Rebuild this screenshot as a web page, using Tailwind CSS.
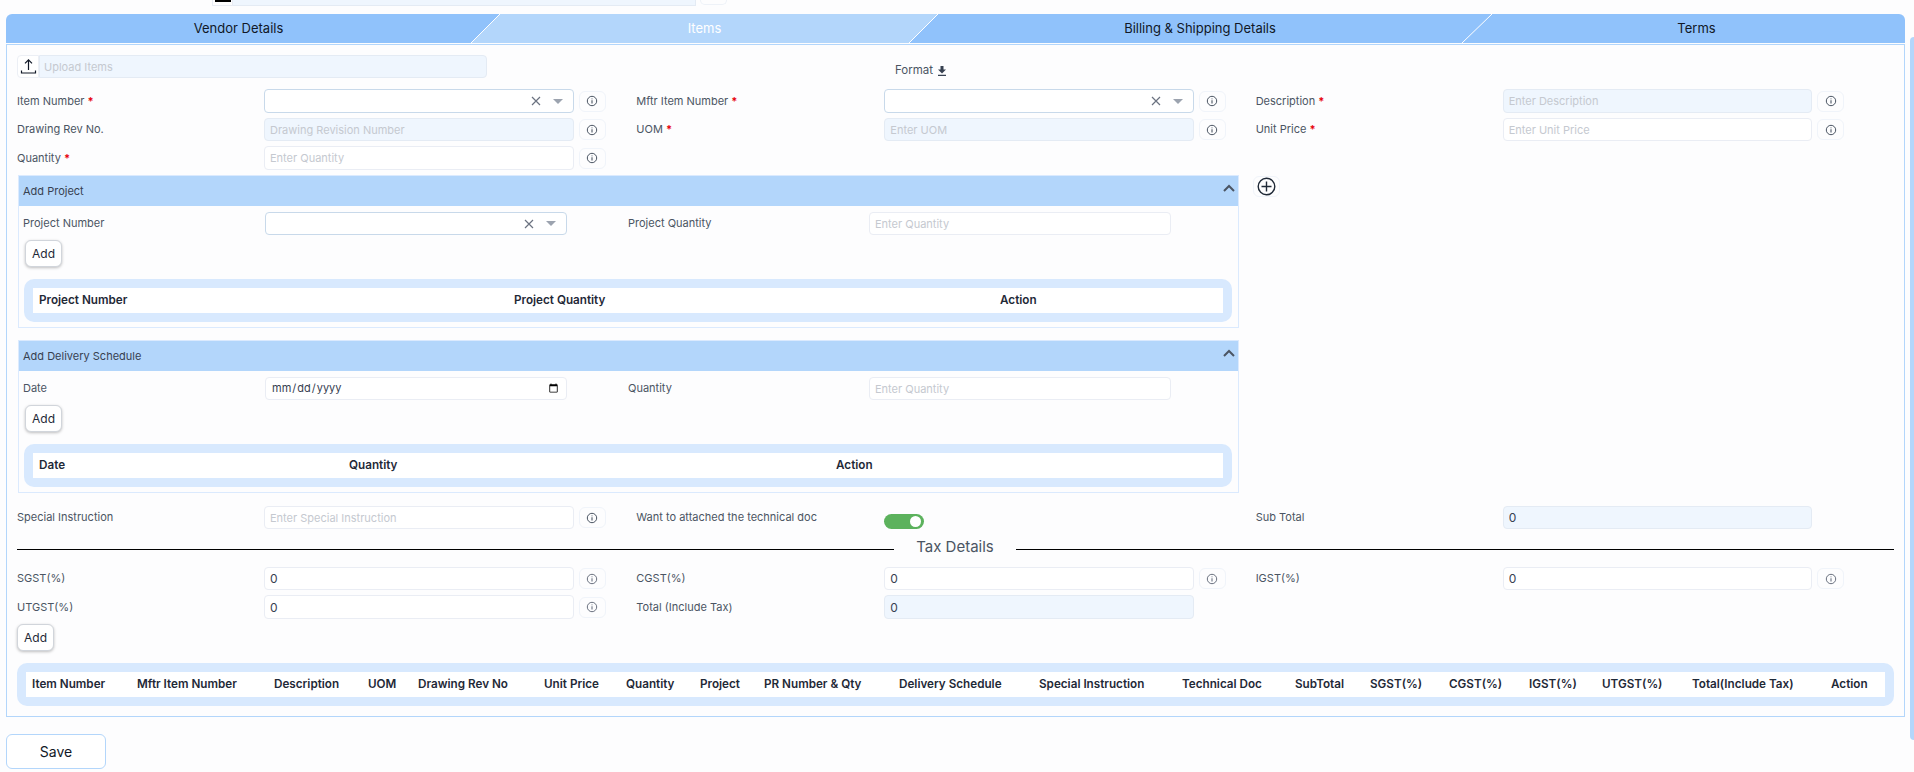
<!DOCTYPE html>
<html lang="en">
<head>
    <meta charset="UTF-8">
    <meta name="viewport" content="width=device-width, initial-scale=1.0">
    <title>Add Items</title>
    <script src="https://cdn.jsdelivr.net/npm/@tailwindcss/browser@4"></script>
</head>
<body class="relative h-[772px] overflow-hidden bg-[#fdfdfe] font-['Inter',sans-serif] text-[11px] text-[#4b5563]">

    <svg class="hidden">
        <symbol id="info" viewBox="0 0 12 12"><circle cx="6" cy="6" r="4.7" fill="none" stroke="currentColor" stroke-width="1"/><path d="M6 3.400v.9M6 5.300v3.200" fill="none" stroke="currentColor" stroke-width="1.100"/></symbol>
        <symbol id="clear" viewBox="0 0 10 10"><path d="M1 1l8 8M9 1l-8 8" fill="none" stroke="currentColor" stroke-width="1.200"/></symbol>
        <symbol id="caret" viewBox="0 0 10 5"><path d="M0 0h10L5 5z" fill="currentColor"/></symbol>
        <symbol id="chevron" viewBox="0 0 12 8"><path d="M1 7l5-5 5 5" fill="none" stroke="currentColor" stroke-width="2"/></symbol>
    </svg>

    <!-- scrollbar -->
    <div class="absolute right-0 top-[37px] h-[703px] w-[4px] rounded-l-md bg-[#b3d6fb]"></div>

    <!-- cut off row above the tabs -->
    <div class="flex h-[14px] items-start overflow-hidden pl-[212px]">
        <div class="flex h-[6px] w-[21px] justify-center border-b border-x border-[#e8ecf4]"><div class="h-[2px] w-[16px] bg-black"></div></div>
        <div class="h-[6px] w-[463px] border-b border-r border-[#e4ebf4] bg-[#eff6fe]"></div>
        <div class="ml-[4px] h-[5px] w-[27px] rounded-b-md border-b border-x border-[#eef2f8]"></div>
    </div>

    <div class="mx-[6px] w-[1899px]">
        <!-- tabs -->
        <div class="relative flex h-[29px] overflow-hidden rounded-t-md bg-[#90c2fb] text-[13px] text-[#111827]">
            <div class="flex w-[465px] items-center justify-center">Vendor Details</div>
            <div class="flex w-[467px] items-center justify-center bg-[#b3d6fb] text-white [clip-path:polygon(29px_0,100%_0,calc(100%-29px)_100%,0_100%)]">Items</div>
            <div class="flex w-[524px] items-center justify-center">Billing &amp; Shipping Details</div>
            <div class="flex w-[443px] items-center justify-center pl-[26px]">Terms</div>
            <svg class="absolute inset-0 h-[29px] w-[1899px]" viewBox="0 0 1899 29"><path d="M465 29L494 0M903 29L932 0M1456 29L1486 0" stroke="#fff" stroke-width="1" fill="none"/></svg>
        </div>

        <!-- form panel -->
        <div class="mt-[1px] h-[673px] border border-[#b3d6fb] pl-[10px]">
            <div class="mt-[10px] flex h-[23px]">
                <div class="flex w-[22px] items-center justify-center rounded-l-sm border border-[#eceff5] bg-white text-[#111827]">
                    <svg class="h-[17px] w-[17px]" viewBox="0 0 17 17" fill="none" stroke="currentColor" stroke-width="1.200"><path d="M8.500 12V2M5 5.300l3.500-3.500L12 5.300M1.500 12.500v2.500h14v-2.500"/></svg>
                </div>
                <input disabled placeholder="Upload Items" class="h-[23px] w-[448px] rounded-r-sm border border-[#e4ebf4] bg-[#eff6fe] pl-[4px] text-[11px] placeholder:text-[#c5c9d0]">
                <div class="ml-[408px] flex items-center gap-[4px] pt-[8px] text-[11.5px]">Format
                    <svg class="h-[10px] w-[10px] text-[#374151]" viewBox="0 0 10 10"><path d="M3.500 0h3v3.500H9L5 7.400 1 3.500h2.500zM1 8.700h8V10H1z" fill="currentColor"/></svg>
                </div>
            </div>

            <div class="mt-[11px] grid w-[1858px] grid-cols-3">
                <div class="flex h-[24px] items-center">
                    <label class="w-[247px]">Item Number <span class="font-bold text-red-600">*</span></label>
                    <div class="flex h-[24px] w-[309.500px] items-center justify-end gap-[12px] rounded-sm border border-[#c8d9ea] bg-white pr-[10px] text-[#6b7280]"><svg class="h-[10px] w-[10px]"><use href="#clear"/></svg><svg class="h-[5px] w-[10px] text-[#9ca3af]"><use href="#caret"/></svg></div>
                    <div class="ml-[5px] flex h-[21px] w-[27px] items-center justify-center rounded-md border border-[#f0f4fa] text-[#4b5563]"><svg class="h-[12px] w-[12px]"><use href="#info"/></svg></div>
                </div>
                <div class="flex h-[24px] items-center">
                    <label class="w-[248px]">Mftr Item Number <span class="font-bold text-red-600">*</span></label>
                    <div class="flex h-[24px] w-[309.500px] items-center justify-end gap-[12px] rounded-sm border border-[#c8d9ea] bg-white pr-[10px] text-[#6b7280]"><svg class="h-[10px] w-[10px]"><use href="#clear"/></svg><svg class="h-[5px] w-[10px] text-[#9ca3af]"><use href="#caret"/></svg></div>
                    <div class="ml-[5px] flex h-[21px] w-[27px] items-center justify-center rounded-md border border-[#f0f4fa] text-[#4b5563]"><svg class="h-[12px] w-[12px]"><use href="#info"/></svg></div>
                </div>
                <div class="flex h-[24px] items-center">
                    <label class="w-[247px]">Description <span class="font-bold text-red-600">*</span></label>
                    <input disabled placeholder="Enter Description" class="h-[24px] w-[309.500px] rounded-sm border border-[#e4ebf4] bg-[#eff6fe] pl-[5px] text-[11px] placeholder:text-[#c5c9d0]">
                    <div class="ml-[5px] flex h-[21px] w-[27px] items-center justify-center rounded-md border border-[#f0f4fa] text-[#4b5563]"><svg class="h-[12px] w-[12px]"><use href="#info"/></svg></div>
                </div>
            </div>

            <div class="mt-[5px] grid w-[1858px] grid-cols-3">
                <div class="flex h-[23px] items-center">
                    <label class="w-[247px]">Drawing Rev No.</label>
                    <input disabled placeholder="Drawing Revision Number" class="h-[23px] w-[309.500px] rounded-sm border border-[#e4ebf4] bg-[#eff6fe] pl-[5px] text-[11px] placeholder:text-[#c5c9d0]">
                    <div class="ml-[5px] flex h-[21px] w-[27px] items-center justify-center rounded-md border border-[#f0f4fa] text-[#4b5563]"><svg class="h-[12px] w-[12px]"><use href="#info"/></svg></div>
                </div>
                <div class="flex h-[23px] items-center">
                    <label class="w-[248px]">UOM <span class="font-bold text-red-600">*</span></label>
                    <input disabled placeholder="Enter UOM" class="h-[23px] w-[309.500px] rounded-sm border border-[#e4ebf4] bg-[#eff6fe] pl-[5px] text-[11px] placeholder:text-[#c5c9d0]">
                    <div class="ml-[5px] flex h-[21px] w-[27px] items-center justify-center rounded-md border border-[#f0f4fa] text-[#4b5563]"><svg class="h-[12px] w-[12px]"><use href="#info"/></svg></div>
                </div>
                <div class="flex h-[23px] items-center">
                    <label class="w-[247px]">Unit Price <span class="font-bold text-red-600">*</span></label>
                    <input placeholder="Enter Unit Price" class="h-[23px] w-[309.500px] rounded-sm border border-[#eaedf4] bg-white pl-[5px] text-[11px] placeholder:text-[#c5c9d0]">
                    <div class="ml-[5px] flex h-[21px] w-[27px] items-center justify-center rounded-md border border-[#f0f4fa] text-[#4b5563]"><svg class="h-[12px] w-[12px]"><use href="#info"/></svg></div>
                </div>
            </div>

            <div class="mt-[5px] flex h-[24px] items-center">
                <label class="w-[247px]">Quantity <span class="font-bold text-red-600">*</span></label>
                <input placeholder="Enter Quantity" class="h-[24px] w-[309.500px] rounded-sm border border-[#eaedf4] bg-white pl-[5px] text-[11px] placeholder:text-[#c5c9d0]">
                <div class="ml-[5px] flex h-[21px] w-[27px] items-center justify-center rounded-md border border-[#f0f4fa] text-[#4b5563]"><svg class="h-[12px] w-[12px]"><use href="#info"/></svg></div>
            </div>

            <div class="mt-[5px] flex items-start">
                <div class="ml-[1px] w-[1221px]">
                    <!-- Add Project -->
                    <div class="h-[153px] border border-[#dbeafe]">
                        <div class="flex h-[30px] items-start justify-between bg-[#b3d6fb] pr-[3px] pl-[4px] pt-[7px] text-[#374151]">Add Project
                            <svg class="mt-[1px] h-[8px] w-[12px] text-[#4b5563]"><use href="#chevron"/></svg>
                        </div>
                        <div class="mt-[6px] grid grid-cols-[242px_302px_61px_241px_302px] items-center pl-[4px]">
                            <label>Project Number</label>
                            <div class="flex h-[23px] items-center justify-end gap-[12px] rounded-sm border border-[#c8d9ea] bg-white pr-[10px] text-[#6b7280]"><svg class="h-[10px] w-[10px]"><use href="#clear"/></svg><svg class="h-[5px] w-[10px] text-[#9ca3af]"><use href="#caret"/></svg></div>
                            <div></div>
                            <label>Project Quantity</label>
                            <input placeholder="Enter Quantity" class="h-[23px] w-[302px] rounded-sm border border-[#eaedf4] bg-white pl-[5px] text-[11px] placeholder:text-[#c5c9d0]">
                        </div>
                        <button class="mt-[5px] ml-[6px] block h-[27px] w-[37px] rounded-md border border-[#d1d5db] bg-white text-[12px] text-[#1f2937] shadow-[0_1px_3px_rgba(0,0,0,0.25)]">Add</button>
                        <div class="mt-[12px] ml-[5px] w-[1208px] rounded-[10px] bg-[#d8e9fe] p-[9px]">
                            <table class="w-full table-fixed bg-white text-left text-[11.700px] text-[#1f2937]">
                                <tr class="h-[25px]">
                                    <th class="w-[475px] pl-[6px] font-semibold">Project Number</th>
                                    <th class="w-[486px] pl-[6px] font-semibold">Project Quantity</th>
                                    <th class="pl-[6px] font-semibold">Action</th>
                                </tr>
                            </table>
                        </div>
                    </div>

                    <!-- Add Delivery Schedule -->
                    <div class="mt-[12px] h-[153px] border border-[#dbeafe]">
                        <div class="flex h-[30px] items-start justify-between bg-[#b3d6fb] pr-[3px] pl-[4px] pt-[7px] text-[#374151]">Add Delivery Schedule
                            <svg class="mt-[1px] h-[8px] w-[12px] text-[#4b5563]"><use href="#chevron"/></svg>
                        </div>
                        <div class="mt-[6px] grid grid-cols-[242px_302px_61px_241px_302px] items-center pl-[4px]">
                            <label>Date</label>
                            <input type="date" class="h-[23px] w-[302px] rounded-sm border border-[#eaedf4] bg-white px-[5px] text-[11px] text-[#374151]">
                            <div></div>
                            <label>Quantity</label>
                            <input placeholder="Enter Quantity" class="h-[23px] w-[302px] rounded-sm border border-[#eaedf4] bg-white pl-[5px] text-[11px] placeholder:text-[#c5c9d0]">
                        </div>
                        <button class="mt-[5px] ml-[6px] block h-[27px] w-[37px] rounded-md border border-[#d1d5db] bg-white text-[12px] text-[#1f2937] shadow-[0_1px_3px_rgba(0,0,0,0.25)]">Add</button>
                        <div class="mt-[12px] ml-[5px] w-[1208px] rounded-[10px] bg-[#d8e9fe] p-[9px]">
                            <table class="w-full table-fixed bg-white text-left text-[11.700px] text-[#1f2937]">
                                <tr class="h-[25px]">
                                    <th class="w-[310px] pl-[6px] font-semibold">Date</th>
                                    <th class="w-[487px] pl-[6px] font-semibold">Quantity</th>
                                    <th class="pl-[6px] font-semibold">Action</th>
                                </tr>
                            </table>
                        </div>
                    </div>
                </div>
                <div class="mt-[1px] ml-[14px] flex h-[21px] w-[27px] items-center justify-center rounded-md border border-[#f0f4fa] text-[#1f2937]">
                    <svg class="h-[19px] w-[19px]" viewBox="0 0 19 19" fill="none" stroke="currentColor" stroke-width="1.400"><circle cx="9.500" cy="9.500" r="8.300"/><path d="M9.500 4.500v10M4.500 9.500h10"/></svg>
                </div>
            </div>

            <div class="mt-[13px] grid w-[1858px] grid-cols-3">
                <div class="flex h-[23px] items-center">
                    <label class="w-[247px]">Special Instruction</label>
                    <input placeholder="Enter Special Instruction" class="h-[23px] w-[309.500px] rounded-sm border border-[#eaedf4] bg-white pl-[5px] text-[11px] placeholder:text-[#c5c9d0]">
                    <div class="ml-[5px] flex h-[21px] w-[27px] items-center justify-center rounded-md border border-[#f0f4fa] text-[#4b5563]"><svg class="h-[12px] w-[12px]"><use href="#info"/></svg></div>
                </div>
                <div class="flex h-[23px] items-center">
                    <label class="w-[248px]">Want to attached the technical doc</label>
                    <div class="mt-[7px] flex h-[15px] w-[40px] items-center justify-end rounded-full bg-[#5cb25d] pr-[3px]"><div class="h-[11px] w-[11px] rounded-full bg-white"></div></div>
                </div>
                <div class="flex h-[23px] items-center">
                    <label class="w-[247px]">Sub Total</label>
                    <input disabled value="0" class="h-[23px] w-[309.500px] rounded-sm border border-[#e4ebf4] bg-[#eff6fe] pl-[5px] text-[12px] text-[#374151]">
                </div>
            </div>

            <!-- Tax Details divider -->
            <div class="mt-[8px] flex h-[24px] w-[1877px] items-center">
                <div class="h-px w-[877px] bg-black"></div>
                <span class="w-[122px] pb-[3px] text-center text-[15px] text-[#4b5563]">Tax Details</span>
                <div class="h-px flex-1 bg-black"></div>
            </div>

            <div class="mt-[6px] grid w-[1858px] grid-cols-3">
                <div class="flex h-[23px] items-center">
                    <label class="w-[247px]">SGST(%)</label>
                    <input value="0" class="h-[23px] w-[309.500px] rounded-sm border border-[#eaedf4] bg-white pl-[5px] text-[12px] text-[#374151]">
                    <div class="ml-[5px] flex h-[21px] w-[27px] items-center justify-center rounded-md border border-[#f0f4fa] text-[#6b7280]"><svg class="h-[12px] w-[12px]"><use href="#info"/></svg></div>
                </div>
                <div class="flex h-[23px] items-center">
                    <label class="w-[248px]">CGST(%)</label>
                    <input value="0" class="h-[23px] w-[309.500px] rounded-sm border border-[#eaedf4] bg-white pl-[5px] text-[12px] text-[#374151]">
                    <div class="ml-[5px] flex h-[21px] w-[27px] items-center justify-center rounded-md border border-[#f0f4fa] text-[#6b7280]"><svg class="h-[12px] w-[12px]"><use href="#info"/></svg></div>
                </div>
                <div class="flex h-[23px] items-center">
                    <label class="w-[247px]">IGST(%)</label>
                    <input value="0" class="h-[23px] w-[309.500px] rounded-sm border border-[#eaedf4] bg-white pl-[5px] text-[12px] text-[#374151]">
                    <div class="ml-[5px] flex h-[21px] w-[27px] items-center justify-center rounded-md border border-[#f0f4fa] text-[#6b7280]"><svg class="h-[12px] w-[12px]"><use href="#info"/></svg></div>
                </div>
            </div>

            <div class="mt-[5px] grid w-[1858px] grid-cols-3">
                <div class="flex h-[24px] items-center">
                    <label class="w-[247px]">UTGST(%)</label>
                    <input value="0" class="h-[24px] w-[309.500px] rounded-sm border border-[#eaedf4] bg-white pl-[5px] text-[12px] text-[#374151]">
                    <div class="ml-[5px] flex h-[21px] w-[27px] items-center justify-center rounded-md border border-[#f0f4fa] text-[#6b7280]"><svg class="h-[12px] w-[12px]"><use href="#info"/></svg></div>
                </div>
                <div class="flex h-[24px] items-center">
                    <label class="w-[248px]">Total (Include Tax)</label>
                    <input disabled value="0" class="h-[24px] w-[309.500px] rounded-sm border border-[#e4ebf4] bg-[#eff6fe] pl-[5px] text-[12px] text-[#374151]">
                </div>
            </div>

            <button class="mt-[5px] block h-[27px] w-[37px] rounded-md border border-[#d1d5db] bg-white text-[12px] text-[#1f2937] shadow-[0_1px_3px_rgba(0,0,0,0.25)]">Add</button>

            <div class="mt-[12px] w-[1877px] rounded-[10px] bg-[#d8e9fe] p-[9px]">
                <table class="w-[1859px] table-fixed bg-white text-left text-[11.700px] whitespace-nowrap text-[#1f2937]">
                    <tr class="h-[25px]">
                        <th class="w-[105px] pl-[6px] font-semibold">Item Number</th>
                        <th class="w-[137px] pl-[6px] font-semibold">Mftr Item Number</th>
                        <th class="w-[94px] pl-[6px] font-semibold">Description</th>
                        <th class="w-[50px] pl-[6px] font-semibold">UOM</th>
                        <th class="w-[126px] pl-[6px] font-semibold">Drawing Rev No</th>
                        <th class="w-[82px] pl-[6px] font-semibold">Unit Price</th>
                        <th class="w-[74px] pl-[6px] font-semibold">Quantity</th>
                        <th class="w-[64px] pl-[6px] font-semibold">Project</th>
                        <th class="w-[135px] pl-[6px] font-semibold">PR Number &amp; Qty</th>
                        <th class="w-[140px] pl-[6px] font-semibold">Delivery Schedule</th>
                        <th class="w-[143px] pl-[6px] font-semibold">Special Instruction</th>
                        <th class="w-[113px] pl-[6px] font-semibold">Technical Doc</th>
                        <th class="w-[75px] pl-[6px] font-semibold">SubTotal</th>
                        <th class="w-[79px] pl-[6px] font-semibold">SGST(%)</th>
                        <th class="w-[80px] pl-[6px] font-semibold">CGST(%)</th>
                        <th class="w-[73px] pl-[6px] font-semibold">IGST(%)</th>
                        <th class="w-[90px] pl-[6px] font-semibold">UTGST(%)</th>
                        <th class="w-[139px] pl-[6px] font-semibold">Total(Include Tax)</th>
                        <th class="pl-[6px] font-semibold">Action</th>
                    </tr>
                </table>
            </div>
        </div>

        <button class="mt-[17px] block h-[35px] w-[100px] rounded-md border border-[#b3d6fb] bg-white text-[14px] text-[#111827]">Save</button>
    </div>

</body>
</html>
